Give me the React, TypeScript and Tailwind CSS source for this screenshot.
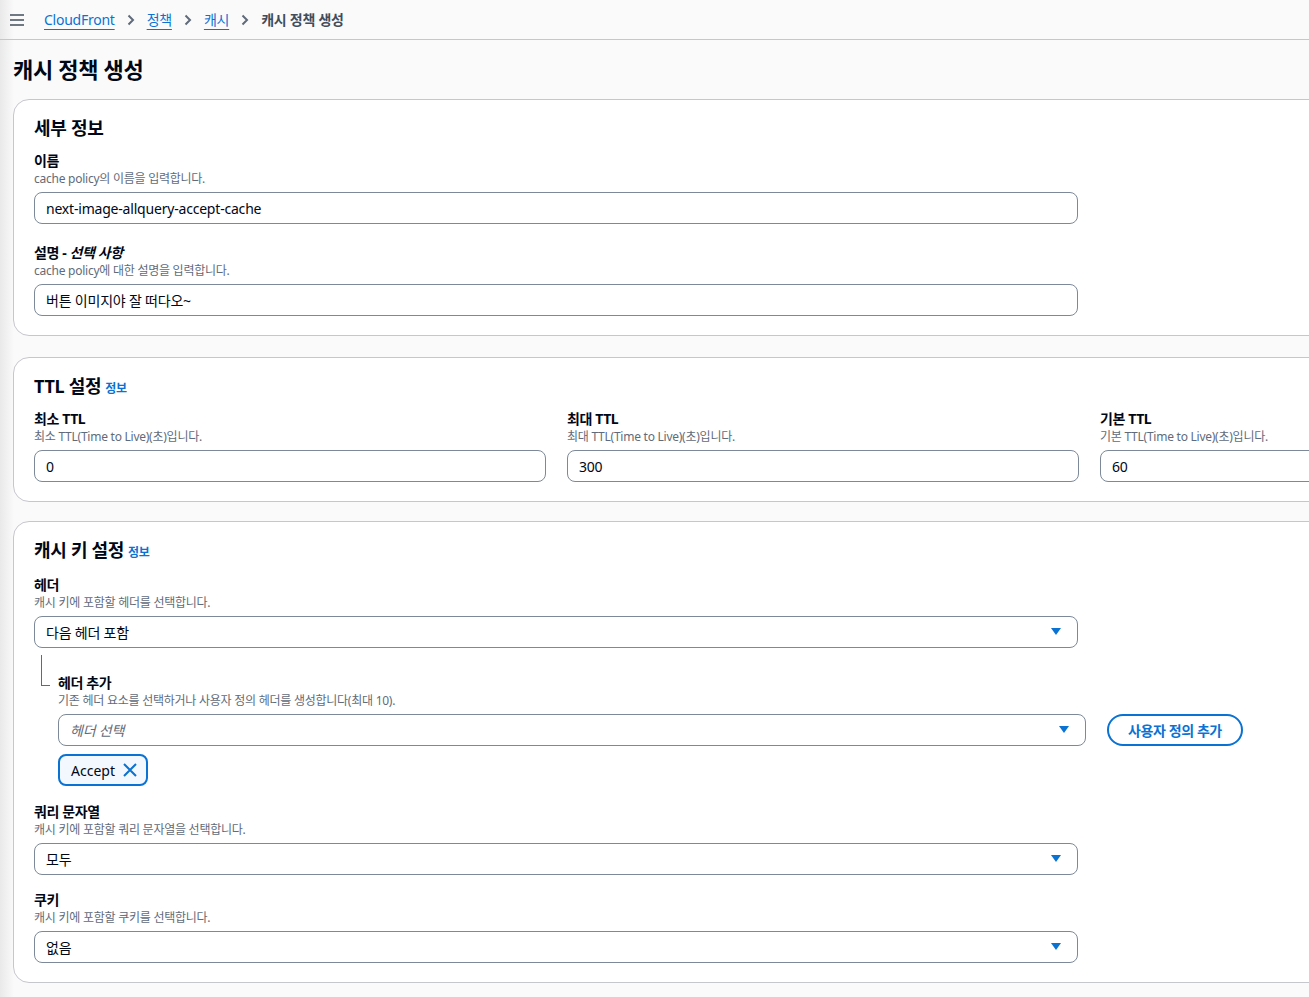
import React from 'react';

const FONT = "font-['Noto_Sans','Noto_Sans_CJK_KR',sans-serif]";

const Chevron = () => (
  <svg width="8" height="12" viewBox="0 0 8 12" className="mx-[12px] shrink-0">
    <path d="M1.5 1.5 L6 6 L1.5 10.5" fill="none" stroke="#5f6b7a" strokeWidth="2" />
  </svg>
);

const Caret = () => (
  <svg width="10" height="8" viewBox="0 0 10 8" className="shrink-0">
    <path d="M0 0 H10 L5 7 Z" fill="#0972d3" />
  </svg>
);

const Info = () => (
  <a className="ml-[4px] text-[12px] font-bold tracking-[-0.3px] text-[#0972d3] leading-none">정보</a>
);

const Label = ({ children, desc }: { children: React.ReactNode; desc: string }) => (
  <div>
    <div className="text-[14px] font-bold leading-[20px] tracking-[-0.4px] text-[#000716]">{children}</div>
    <div className="text-[12px] leading-[16px] tracking-[-0.25px] text-[#5f6b7a]">{desc}</div>
  </div>
);

const Input = ({ value, className = 'w-[1044px]' }: { value: string; className?: string }) => (
  <div
    className={`${className} mt-[5px] h-[32px] rounded-[8px] border border-[#7d8998] bg-white pl-[11px] flex items-center text-[14px] tracking-[-0.2px] text-[#000716]`}
  >
    {value}
  </div>
);

const Select = ({
  value,
  placeholder,
  className = 'w-[1044px]',
}: {
  value?: string;
  placeholder?: string;
  className?: string;
}) => (
  <div
    className={`${className} mt-[5px] h-[32px] rounded-[8px] border border-[#7d8998] bg-white pl-[11px] pr-[16px] flex items-center justify-between text-[14px] tracking-[-0.2px]`}
  >
    {value ? (
      <span className="text-[#000716]">{value}</span>
    ) : (
      <span className="italic text-[#5f6b7a]">{placeholder}</span>
    )}
    <Caret />
  </div>
);

const Container = ({
  title,
  info,
  className = '',
  children,
}: {
  title: string;
  info?: boolean;
  className?: string;
  children: React.ReactNode;
}) => (
  <section
    className={`${className} w-[1640px] rounded-[16px] border border-[#c6c6cd] bg-white px-[20px] pt-[16px] pb-[19px]`}
  >
    <h2 className="mb-[11px] flex items-baseline text-[18px] font-bold leading-[24px] tracking-[-0.3px] text-[#000716]">
      {title}
      {info && <Info />}
    </h2>
    {children}
  </section>
);

export default function App() {
  return (
    <div
      className={`${FONT} h-[997px] w-full overflow-hidden bg-[linear-gradient(to_right,#e9e9e9,#fafafa_14px)] text-[#000716]`}
    >
      {/* top breadcrumb bar */}
      <header className="flex h-[40px] items-center border-b border-[#c6c6cd] pl-[10px]">
        <svg width="14" height="12" viewBox="0 0 14 12" className="shrink-0">
          <path d="M0 1 H14 M0 6 H14 M0 11 H14" stroke="#414d5c" strokeWidth="1.6" />
        </svg>
        <nav className="ml-[20px] flex items-center text-[14px] tracking-[-0.25px]">
          <a className="text-[#0972d3] underline underline-offset-[4px]">CloudFront</a>
          <Chevron />
          <a className="text-[#0972d3] underline underline-offset-[4px]">정책</a>
          <Chevron />
          <a className="text-[#0972d3] underline underline-offset-[4px]">캐시</a>
          <Chevron />
          <span className="font-bold text-[#414d5c]">캐시 정책 생성</span>
        </nav>
      </header>

      <main className="pl-[13px]">
        <h1 className="flex h-[59px] items-center text-[22px] font-bold tracking-[-0.3px]">캐시 정책 생성</h1>

        <div className="flex flex-col">
          <Container title="세부 정보">
            <Label desc="cache policy의 이름을 입력합니다.">이름</Label>
            <Input value="next-image-allquery-accept-cache" />
            <div className="mt-[19px]">
              <Label desc="cache policy에 대한 설명을 입력합니다.">
                설명 - <i>선택 사항</i>
              </Label>
              <Input value="버튼 이미지야 잘 떠다오~" />
            </div>
          </Container>

          <Container title="TTL 설정" info className="mt-[21px]">
            <div className="grid grid-cols-[512px_512px_512px] gap-x-[21px]">
              <div>
                <Label desc="최소 TTL(Time to Live)(초)입니다.">최소 TTL</Label>
                <Input value="0" className="w-full" />
              </div>
              <div>
                <Label desc="최대 TTL(Time to Live)(초)입니다.">최대 TTL</Label>
                <Input value="300" className="w-full" />
              </div>
              <div>
                <Label desc="기본 TTL(Time to Live)(초)입니다.">기본 TTL</Label>
                <Input value="60" className="w-full" />
              </div>
            </div>
          </Container>

          <Container title="캐시 키 설정" info className="mt-[19px]">
            <div className="pt-[2px]">
              <Label desc="캐시 키에 포함할 헤더를 선택합니다.">헤더</Label>
              <Select value="다음 헤더 포함" />
            </div>

            {/* nested header picker */}
            <div className="flex">
              <div className="ml-[7px] w-[17px] shrink-0 pt-[7px]">
                <div className="h-[31px] w-[9px] border-b border-l border-[#5f6b7a]" />
              </div>
              <div className="pt-[25px]">
                <Label desc="기존 헤더 요소를 선택하거나 사용자 정의 헤더를 생성합니다(최대 10).">헤더 추가</Label>
                <div className="flex items-end gap-[21px]">
                  <Select placeholder="헤더 선택" className="w-[1028px]" />
                  <button className="h-[32px] rounded-full border-2 border-[#0972d3] px-[19px] text-[14px] font-bold tracking-[-0.4px] text-[#0972d3]">
                    사용자 정의 추가
                  </button>
                </div>
                <div className="mt-[8px] flex h-[32px] w-[90px] items-center justify-between rounded-[8px] border-2 border-[#0972d3] bg-[#f2f8fd] pl-[11px] pr-[9px] text-[14px]">
                  <span>Accept</span>
                  <svg width="14" height="14" viewBox="0 0 14 14">
                    <path d="M1 1 L13 13 M13 1 L1 13" stroke="#0972d3" strokeWidth="2" />
                  </svg>
                </div>
              </div>
            </div>

            <div className="mt-[16px]">
              <Label desc="캐시 키에 포함할 쿼리 문자열을 선택합니다.">쿼리 문자열</Label>
              <Select value="모두" />
            </div>
            <div className="mt-[15px]">
              <Label desc="캐시 키에 포함할 쿠키를 선택합니다.">쿠키</Label>
              <Select value="없음" />
            </div>
          </Container>
        </div>
      </main>
    </div>
  );
}
